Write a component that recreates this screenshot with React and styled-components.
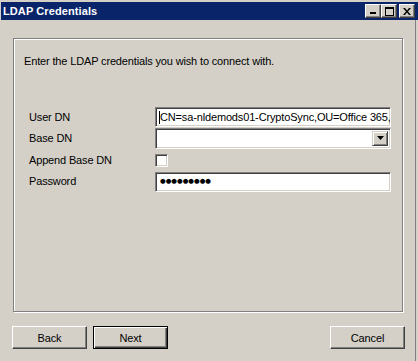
import React from "react";
import styled, { createGlobalStyle } from "styled-components";

const Global = createGlobalStyle`
  html, body { margin: 0; padding: 0; background: #d4d0c8; }
  body { font-family: "Liberation Sans", Arial, sans-serif; font-size: 11px; color: #000; letter-spacing: -0.15px; }
`;

const Window = styled.div`
  width: 418px;
  height: 361px;
  box-sizing: border-box;
  background: #d4d0c8;
  display: flex;
  flex-direction: column;
  overflow: hidden;
`;

const TitleBar = styled.div`
  margin: 2px 0 0 1px;
  height: 18px;
  background: #0a246a;
  display: flex;
  align-items: center;
  padding: 0 3px 0 2px;
  flex-shrink: 0;
`;

const Title = styled.div`
  flex: 1;
  color: #fff;
  font-weight: bold;
  font-size: 11px;
  letter-spacing: 0.1px;
`;

const CaptionButton = styled.div`
  width: 16px;
  height: 14px;
  box-sizing: border-box;
  background: #d4d0c8;
  border-top: 1px solid #fff;
  border-left: 1px solid #fff;
  border-right: 1px solid #404040;
  border-bottom: 1px solid #404040;
  box-shadow: inset -1px -1px #808080;
  display: flex;
  align-items: center;
  justify-content: center;
  margin-left: ${(p) => p.$gap || 0}px;
`;

const Body = styled.div`
  flex: 1;
  display: flex;
  flex-direction: column;
  padding: 18px 12px 0 13px;
  margin-right: 2px;
  border-right: 1px solid #808080;
`;

const GroupBox = styled.div`
  height: 274px;
  box-sizing: border-box;
  border: 1px solid #808080;
  box-shadow: inset 1px 1px #fff, 1px 1px #fff;
  padding: 16px 10px 0 10px;
`;

const Intro = styled.div`
  line-height: 13px;
`;

const Form = styled.div`
  margin: 39px 0 0 5px;
  display: grid;
  grid-template-columns: 126px 236px;
  grid-template-rows: 20px 22px 22px 21px;
  align-items: center;
`;

const Label = styled.div`
  line-height: 13px;
  white-space: nowrap;
`;

const Sunken = styled.div`
  box-sizing: border-box;
  background: #fff;
  border-top: 1px solid #808080;
  border-left: 1px solid #808080;
  border-right: 1px solid #fff;
  border-bottom: 1px solid #fff;
  box-shadow: inset 1px 1px #404040, inset -1px -1px #d4d0c8;
`;

const TextBox = styled(Sunken)`
  width: 236px;
  height: ${(p) => p.$h || 20}px;
  display: flex;
  align-items: center;
  padding: 0 2px 0 3px;
  overflow: hidden;
  white-space: nowrap;
  position: relative;
`;

const Caret = styled.span`
  display: inline-block;
  width: 1px;
  height: 13px;
  background: #000;
  flex-shrink: 0;
`;

const Value = styled.span`
  line-height: 13px;
`;

const Dots = styled.span`
  font-family: "DejaVu Sans", sans-serif;
  font-size: 6.5px;
  letter-spacing: 0;
  line-height: 13px;
  margin-left: 1px;
`;

const DropButton = styled.div`
  position: absolute;
  right: 2px;
  top: 2px;
  width: 16px;
  height: 15px;
  box-sizing: border-box;
  background: #d4d0c8;
  border-top: 1px solid #d4d0c8;
  border-left: 1px solid #d4d0c8;
  border-right: 1px solid #404040;
  border-bottom: 1px solid #404040;
  box-shadow: inset 1px 1px #fff, inset -1px -1px #808080;
  display: flex;
  align-items: center;
  justify-content: center;
`;

const CheckBox = styled(Sunken)`
  width: 13px;
  height: 13px;
`;

const ButtonRow = styled.div`
  margin: 14px -2px 0 -1px;
  display: flex;
  gap: 6px;
`;

const Button = styled.div`
  width: 75px;
  height: 23px;
  box-sizing: border-box;
  background: #d4d0c8;
  display: flex;
  align-items: center;
  justify-content: center;
  border-top: 1px solid ${(p) => (p.$default ? "#000" : "#fff")};
  border-left: 1px solid ${(p) => (p.$default ? "#000" : "#fff")};
  border-right: 1px solid ${(p) => (p.$default ? "#000" : "#404040")};
  border-bottom: 1px solid ${(p) => (p.$default ? "#000" : "#404040")};
  box-shadow: ${(p) =>
    p.$default
      ? "inset 1px 1px #fff, inset -1px -1px #404040, inset -2px -2px #808080"
      : "inset -1px -1px #808080"};
  margin-left: ${(p) => (p.$push ? "auto" : "0")};
`;

export default function App() {
  return (
    <>
      <Global />
      <Window>
        <TitleBar>
          <Title>LDAP Credentials</Title>
          <CaptionButton>
            <svg width="8" height="8" viewBox="0 0 8 8">
              <rect x="1" y="5" width="6" height="2" fill="#000" />
            </svg>
          </CaptionButton>
          <CaptionButton>
            <svg width="9" height="9" viewBox="0 0 9 9">
              <rect x="0.5" y="0.5" width="8" height="8" fill="none" stroke="#000" />
              <rect x="0" y="1" width="9" height="1" fill="#000" />
            </svg>
          </CaptionButton>
          <CaptionButton $gap={2}>
            <svg width="8" height="7" viewBox="0 0 8 7">
              <path d="M0 0h2l2 2.5 2-2.5h2l-3 3.5 3 3.5h-2l-2-2.5-2 2.5h-2l3-3.5z" fill="#000" />
            </svg>
          </CaptionButton>
        </TitleBar>
        <Body>
          <GroupBox>
            <Intro>Enter the LDAP credentials you wish to connect with.</Intro>
            <Form>
              <Label>User DN</Label>
              <TextBox>
                <Caret />
                <Value>CN=sa-nldemods01-CryptoSync,OU=Office 365,OU=Service Accounts</Value>
              </TextBox>
              <Label>Base DN</Label>
              <TextBox $h={21}>
                <DropButton>
                  <svg width="7" height="4" viewBox="0 0 7 4">
                    <path d="M0 0h7l-3.5 4z" fill="#000" />
                  </svg>
                </DropButton>
              </TextBox>
              <Label>Append Base DN</Label>
              <CheckBox />
              <Label>Password</Label>
              <TextBox>
                <Dots>●●●●●●●●●</Dots>
              </TextBox>
            </Form>
          </GroupBox>
          <ButtonRow>
            <Button>Back</Button>
            <Button $default>Next</Button>
            <Button $push>Cancel</Button>
          </ButtonRow>
        </Body>
      </Window>
    </>
  );
}
